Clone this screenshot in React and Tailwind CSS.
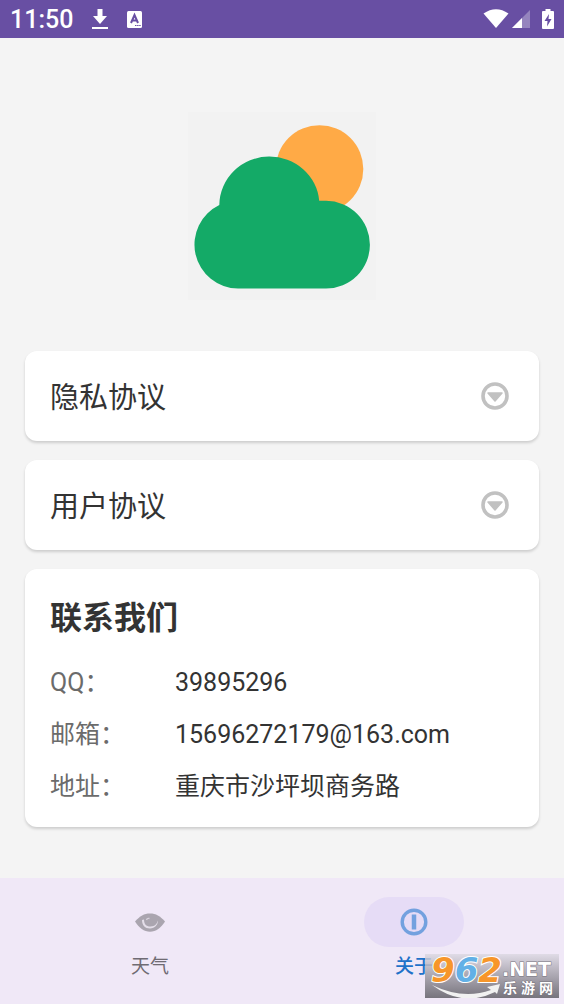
import React, { useState } from 'react'

const CONTACTS = [
    { label: 'QQ：', value: '39895296' },
    { label: '邮箱：', value: '15696272179@163.com' },
    { label: '地址：', value: '重庆市沙坪坝商务路' },
]

const StatusBar = () => (
    <header className="flex h-[38px] shrink-0 items-center justify-between bg-[#684fa3] px-[10px] text-white">
        <div className="flex items-center">
            <span className="pt-[2px] text-[25px] leading-9 font-medium">11:50</span>
            <svg className="ml-[19px] h-[22px] w-4" viewBox="0 0 16 22" fill="currentColor">
                <path d="M5.500 1h5v7h4.500l-7 8-7-8h4.500z" />
                <path d="M0 19h16v2H0z" />
            </svg>
            <svg className="ml-[19px] h-[17px] w-[15px]" viewBox="0 0 15 17">
                <rect width="15" height="17" rx="1.5" fill="#fff" />
                <path d="M4 12 7.5 4 11 12M5.2 9.5h4.6" fill="none" stroke="#684fa3" strokeWidth="2" />
                <path d="M8 14.5h6" stroke="#684fa3" strokeWidth="1" strokeDasharray="1.5 .6" />
            </svg>
        </div>
        <div className="flex items-center">
            <svg className="h-5 w-[26px]" viewBox="0 0 26 20" fill="currentColor">
                <path d="M.5 4.5Q13-4 25.500 4.500L13 19z" />
            </svg>
            <svg className="ml-[3px] h-[18px] w-[18px]" viewBox="0 0 18 18" fill="#fff">
                <path d="M18 0v18H0z" opacity=".3" />
                <path d="M10 8v10H0z" />
            </svg>
            <svg className="ml-[12px] h-5 w-3" viewBox="0 0 12 20">
                <path d="M3.500 0h5v2H11q1 0 1 1v16q0 1-1 1H1q-1 0-1-1V3q0-1 1-1h2.500z" fill="#fff" />
                <path d="M7 5 2.500 12H5.500L5 17.500 9.500 10H6.500z" fill="#684fa3" />
            </svg>
        </div>
    </header>
)

const WeatherLogo = () => (
    <svg className="h-[188px] w-[188px] bg-[#f2f2f2]" viewBox="0 0 188 188">
        <circle cx="131.500" cy="57" r="43.800" fill="#ffaa46" />
        <path
            d="M31.300 93A50 49 0 0 1 81 44.600A50 48 0 0 1 131.200 88.800H138A43.900 43.900 0 0 1 138 176.600H50A44 44 0 0 1 31.300 93z"
            fill="#14aa67"
        />
    </svg>
)

const AgreementCard = ({ title }) => (
    <button
        type="button"
        className="flex h-[90px] w-full cursor-pointer items-center justify-between rounded-xl bg-white pl-[25px] pr-[30px] shadow-[0_2px_3px_rgba(0,0,0,0.16)]"
    >
        <span className="pt-1 text-[29px] leading-10">{title}</span>
        <svg className="h-7 w-7" viewBox="0 0 28 28">
            <circle cx="14" cy="14" r="12" fill="none" stroke="#c1c1c1" strokeWidth="3.600" />
            <path d="M7 11h14l-7 8z" fill="#c1c1c1" stroke="#c1c1c1" strokeWidth="1.500" strokeLinejoin="round" />
        </svg>
    </button>
)

const ContactCard = () => (
    <section className="rounded-xl bg-white px-[25px] pt-[29px] pb-[14px] shadow-[0_2px_3px_rgba(0,0,0,0.16)]">
        <h2 className="mb-[19px] text-[32px] leading-10 font-bold">联系我们</h2>
        <dl>
            {CONTACTS.map(({ label, value }) => (
                <div key={label} className="flex h-[52px] items-center text-[25px]">
                    <dt className="w-[125px] shrink-0 text-[#6b6b6b]">{label}</dt>
                    <dd>{value}</dd>
                </div>
            ))}
        </dl>
    </section>
)

const EyeIcon = () => (
    <svg className="h-5 w-[30px]" viewBox="0 0 30 20">
        <path d="M0 9.500C5 4 9 1.500 15 1.500S25 4 30 9.500C26 16 21 19.800 15 19.800S4 16 0 9.500z" fill="#aaa5af" />
        <path d="M7 8C7 13 10 16.500 15 16.500s8-4 8-8c-1 3-3 6-7.500 6S9 12 9 7.500z" fill="#e4dee9" />
        <path d="M11.500 8q.5-2 3-1.500" fill="none" stroke="#d7d1dc" strokeWidth="1.300" />
    </svg>
)

const AboutIcon = () => (
    <svg className="h-7 w-7" viewBox="0 0 28 28">
        <circle cx="14" cy="14" r="11.800" fill="none" stroke="#73a1df" strokeWidth="3.400" />
        <path d="M14 6.500v15" stroke="#73a1df" strokeWidth="4.500" />
    </svg>
)

const TABS = [
    { id: 'weather', label: '天气', Icon: EyeIcon },
    { id: 'about', label: '关于', Icon: AboutIcon },
]

const BottomNav = () => {
    const [active, setActive] = useState('about')

    return (
        <nav className="flex h-[126px] shrink-0 bg-[#f0e8f7] px-[18px] pt-[19px]">
            {TABS.map(({ id, label, Icon }) => (
                <button
                    key={id}
                    type="button"
                    onClick={() => setActive(id)}
                    className={`flex flex-1 cursor-pointer flex-col items-center text-[19px] leading-7 ${active === id ? 'font-medium text-[#1f72c9]' : 'text-[#6f6b73]'}`}
                >
                    <span className={`flex h-[50px] w-[100px] items-center justify-center rounded-full ${active === id ? 'bg-[#e6dcf6]' : ''}`}>
                        <Icon />
                    </span>
                    <span className="mt-[6px]">{label}</span>
                </button>
            ))}
        </nav>
    )
}

// site badge laid over the bottom right corner
const SiteBadge = () => (
    <div className="absolute right-[5px] bottom-[6px] flex h-11 w-[134px] bg-linear-to-b from-[#dcd8e2]/80 to-[#77747d] pl-[6px] font-bold">
        <svg className="absolute top-0 left-0 h-11 w-[78px]" viewBox="0 0 78 44">
            <path d="M7 31Q38 46 66 36l-4-3 13-3-3 10-2-2Q38 54 7 31z" fill="#f1f1f1" />
        </svg>
        <span className="relative flex w-[71px] font-['DejaVu_Sans',sans-serif] text-[34px] leading-8 italic [-webkit-text-stroke:2px_white] [paint-order:stroke_fill]">
            <span className="text-[#f7962a]">9</span>
            <span className="text-[#62b0e6]">6</span>
            <span className="text-[#f7962a]">2</span>
        </span>
        <span className="flex flex-col pt-[5px] text-white [-webkit-text-stroke:1px_#77737d] [paint-order:stroke_fill]">
            <span className="font-['DejaVu_Sans',sans-serif] text-[19px] leading-5">.NET</span>
            <span className="flex gap-1 pl-[1px] font-['Noto_Sans_CJK_SC',sans-serif] text-[14px] leading-4">
                <span>乐</span>
                <span>游</span>
                <span>网</span>
            </span>
        </span>
    </div>
)

const App = () => (
    <div className="relative flex min-h-screen flex-col bg-[#f4f4f4] font-[Roboto,'Noto_Sans_CJK_SC',sans-serif] text-[#333]">
        <StatusBar />
        <main className="flex flex-1 flex-col px-[25px] pt-[74px] pb-[51px]">
            <div className="mb-[51px] flex justify-center">
                <WeatherLogo />
            </div>
            <div className="flex flex-col gap-[19px]">
                <AgreementCard title="隐私协议" />
                <AgreementCard title="用户协议" />
                <ContactCard />
            </div>
        </main>
        <BottomNav />
        <SiteBadge />
    </div>
)

export default App
